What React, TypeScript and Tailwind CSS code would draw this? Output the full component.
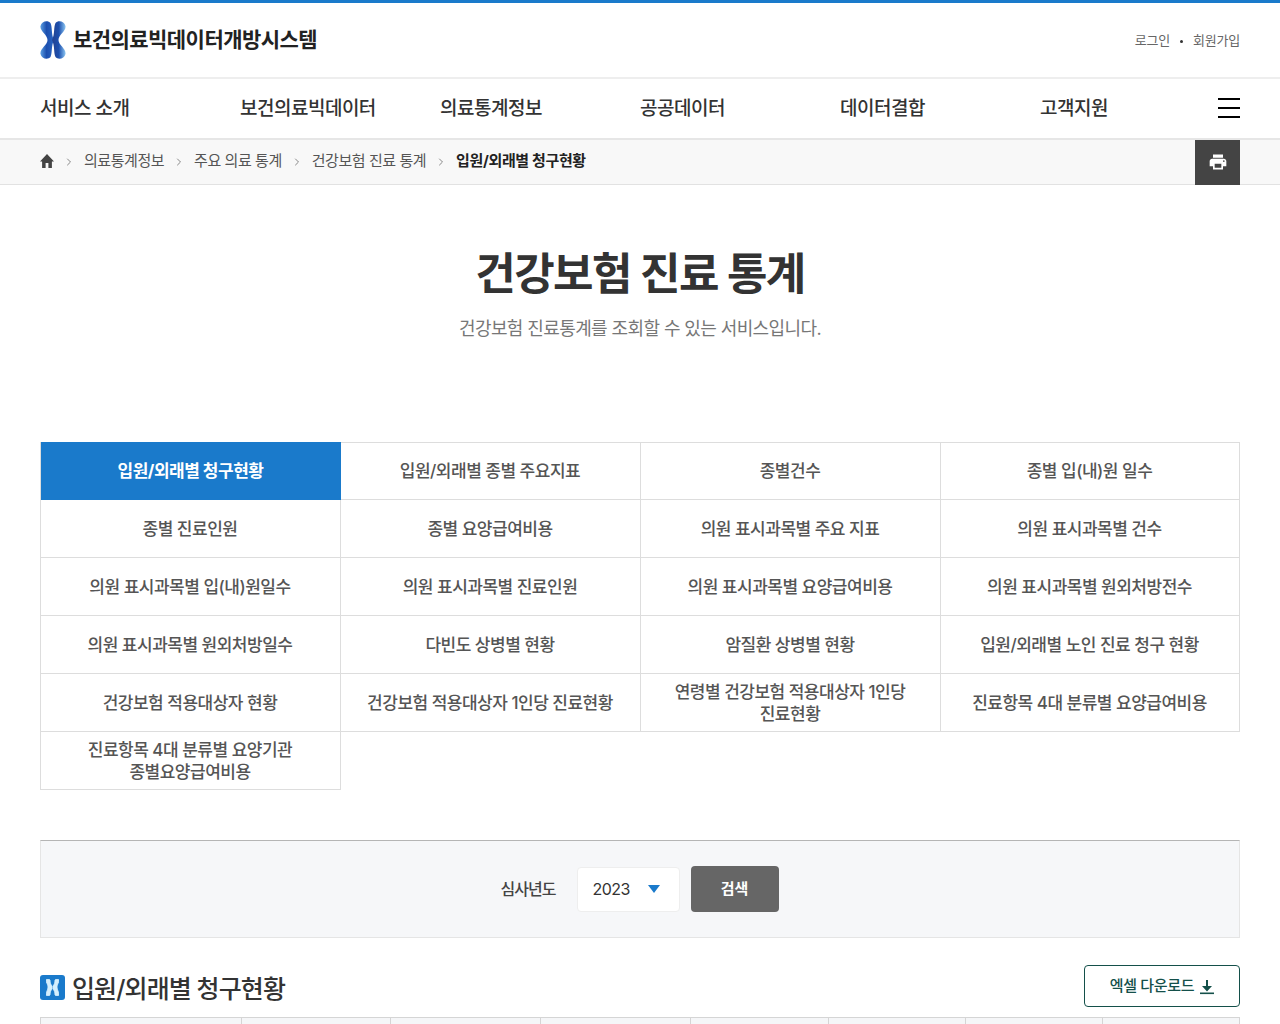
import { ChevronRight } from "lucide-react"

const font = "font-['Inter','Noto_Sans_CJK_KR','Noto_Sans',sans-serif]"

const menus = [
  { label: "서비스 소개", w: "w-[200px]" },
  { label: "보건의료빅데이터", w: "w-[200px]" },
  { label: "의료통계정보", w: "w-[200px]" },
  { label: "공공데이터", w: "w-[200px]" },
  { label: "데이터결합", w: "w-[200px]" },
  { label: "고객지원", w: "w-[178px]" },
]

const tabs = [
  "입원/외래별 청구현황",
  "입원/외래별 종별 주요지표",
  "종별건수",
  "종별 입(내)원 일수",
  "종별 진료인원",
  "종별 요양급여비용",
  "의원 표시과목별 주요 지표",
  "의원 표시과목별 건수",
  "의원 표시과목별 입(내)원일수",
  "의원 표시과목별 진료인원",
  "의원 표시과목별 요양급여비용",
  "의원 표시과목별 원외처방전수",
  "의원 표시과목별 원외처방일수",
  "다빈도 상병별 현황",
  "암질환 상병별 현황",
  "입원/외래별 노인 진료 청구 현황",
  "건강보험 적용대상자 현황",
  "건강보험 적용대상자 1인당 진료현황",
  "연령별 건강보험 적용대상자 1인당 진료현황",
  "진료항목 4대 분류별 요양급여비용",
  "진료항목 4대 분류별 요양기관 종별요양급여비용",
]

const crumbs = ["의료통계정보", "주요 의료 통계", "건강보험 진료 통계"]
const columns = ["w-[201px]", "w-[149px]", "w-[150px]", "w-[150px]", "w-[138px]", "w-[137px]", "w-[137px]", "flex-1"]

function Logo() {
  return (
    <svg width="26" height="38" viewBox="0 0 26 38">
      <defs>
        <linearGradient id="lg" x1="0" y1="0" x2="1" y2="0">
          <stop offset="0" stopColor="#5a9ee2" />
          <stop offset="0.45" stopColor="#1c4fae" />
          <stop offset="1" stopColor="#2a66c4" />
        </linearGradient>
        <linearGradient id="lg2" x1="1" y1="0" x2="0" y2="0">
          <stop offset="0" stopColor="#8cc6f2" />
          <stop offset="0.5" stopColor="#1c4fae" />
          <stop offset="1" stopColor="#24428f" />
        </linearGradient>
      </defs>
      <path d="M0.5 5C1.5 0 8-1 10.5 2c2 4 .5 11 3.5 17-3 6-1.5 13-3.5 17-2.5 3-9 2-10-3-1-5 7-9 7-14S-.5 10 .5 5z" fill="url(#lg)" />
      <path d="M25.5 5C24.5 0 18-1 15.5 2c-2 4-.5 11-3.5 17 3 6 1.5 13 3.5 17 2.5 3 9 2 10-3 1-5-7-9-7-14S26.5 10 25.5 5z" fill="url(#lg2)" />
    </svg>
  )
}

function Header() {
  return (
    <header className="border-t-[3px] border-[#1a7acb]">
      <div className="mx-auto flex h-[74px] w-[1200px] items-center justify-between">
        <div className="flex items-center gap-[7px]">
          <Logo />
          <span className="text-[21px] font-bold tracking-[-0.55px] text-[#222]">보건의료빅데이터개방시스템</span>
        </div>
        <div className="flex items-center gap-[10px] pt-[2px] text-[13px] tracking-[-0.2px] text-[#666]">
          <span>로그인</span>
          <span className="h-[3px] w-[3px] rounded-full bg-[#333]" />
          <span>회원가입</span>
        </div>
      </div>
      <div className="h-[2px] bg-[#eeeeee]" />
      <nav className="mx-auto flex h-[59px] w-[1200px] items-center">
        {menus.map((m) => (
          <div key={m.label} className={`${m.w} pt-[2px] text-[19px] font-medium tracking-[-0.5px] text-[#333]`}>
            {m.label}
          </div>
        ))}
        <div className="mb-[2px] flex w-[22px] flex-col gap-[7px]">
          <span className="h-[2px] bg-black" />
          <span className="h-[2px] bg-black" />
          <span className="h-[2px] bg-black" />
        </div>
      </nav>
      <div className="h-[2px] bg-[#e6e6e6]" />
    </header>
  )
}

function Breadcrumb() {
  return (
    <div className="h-[45px] border-b border-[#e2e2e2] bg-[#f8f8f8]">
      <div className="mx-auto flex h-[45px] w-[1200px] items-start justify-between">
        <div className="flex h-[43px] items-center text-[15px] tracking-[-0.45px] text-[#555]">
          <svg width="14" height="14" viewBox="2 3 20 17" preserveAspectRatio="none" fill="#444" className="mb-[2px]">
            <path d="M10 20v-6h4v6h5v-8h3L12 3 2 12h3v8z" />
          </svg>
          {crumbs.map((c) => (
            <span key={c} className="flex items-center">
              <ChevronRight size={12} className="mx-[9px] text-[#888]" />
              {c}
            </span>
          ))}
          <ChevronRight size={12} className="mx-[9px] text-[#888]" />
          <span className="font-bold tracking-[-0.35px] text-[#222]">입원/외래별 청구현황</span>
        </div>
        <div className="flex h-[45px] w-[45px] items-center justify-center bg-[#444] pb-[2px]">
          <svg width="20" height="20" viewBox="0 0 24 24" fill="#fff">
            <path d="M19 8H5c-1.66 0-3 1.34-3 3v6h4v4h12v-4h4v-6c0-1.66-1.34-3-3-3zm-3 11H8v-5h8v5zm3-7c-.55 0-1-.45-1-1s.45-1 1-1 1 .45 1 1-.45 1-1 1zm-1-9H6v4h12V3z" />
          </svg>
        </div>
      </div>
    </div>
  )
}

function TabGrid() {
  return (
    <div className="grid w-[1200px] grid-cols-4">
      {tabs.map((t, i) => (
        <div
          key={t}
          className={
            i === 0
              ? "relative z-10 -mr-px flex h-[58px] items-center justify-center border-l border-[#dddddd] bg-[#1a7acb] bg-clip-padding pt-[1px] pr-[21px] pl-5 text-center text-[17px] font-bold tracking-[-0.5px] text-white"
              : `flex h-[58px] items-center justify-center border-b border-l border-[#dddddd] pr-[21px] pl-5 text-center text-[17px] leading-[22px] font-medium tracking-[-0.5px] break-keep text-[#555] ${i < 4 ? "border-t" : ""} ${i % 4 === 3 ? "border-r" : ""} ${i === 20 ? "-mr-px border-r" : ""}`
          }
        >
          {t}
        </div>
      ))}
    </div>
  )
}

function SearchBox() {
  return (
    <div className="mt-[50px] flex h-[98px] items-center justify-center border border-x-[#e5e5e5] border-t-[#b5b5b5] border-b-[#e5e5e5] bg-[#f6f7f9]">
      <span className="text-[16px] font-medium tracking-[-1px] text-[#444]">심사년도</span>
      <div className="ml-[22px] flex h-[45px] w-[103px] items-center justify-between rounded-[4px] border border-[#eeeeee] bg-white pr-[19px] pb-[1px] pl-[14px] text-[16px] tracking-[-0.5px] text-[#333]">
        2023
        <span className="h-0 w-0 border-x-[6px] border-t-[8px] border-x-transparent border-t-[#1a7acb]" />
      </div>
      <div className="ml-[11px] flex h-[46px] w-[88px] items-center justify-center rounded-[4px] bg-[#666] pr-[2px] text-[15px] font-bold text-white">
        검색
      </div>
    </div>
  )
}

export default function App() {
  return (
    <div className={`${font} h-[1024px] overflow-hidden bg-white`}>
      <Header />
      <Breadcrumb />
      <main className="mx-auto w-[1200px]">
        <div className="mt-[56px] text-center">
          <h1 className="text-[44px] leading-[66px] font-bold tracking-[-1.5px] text-[#333]">건강보험 진료 통계</h1>
          <p className="mt-[8px] text-[18px] leading-[27px] tracking-[-0.6px] text-[#777]">
            건강보험 진료통계를 조회할 수 있는 서비스입니다.
          </p>
        </div>
        <div className="mt-[100px]">
          <TabGrid />
        </div>
        <SearchBox />
        <div className="mt-[27px] flex h-[42px] items-center justify-between">
          <div className="mt-[2px] flex items-center gap-[7px]">
            <div className="flex h-[25px] w-[25px] items-center justify-center rounded-[3px] bg-[#1a7acb]">
              <svg width="13" height="17" viewBox="0 0 13 17" fill="#d5effd" stroke="#d5effd" strokeWidth="0.8">
                <path d="M0 1c0-1 4-1 4 0 0 3 1 5 2 6v3c-1 1-2 3-2 6 0 1-4 1-4 0 0-3 2-5 2-8S0 4 0 1z" />
                <path d="M13 1c0-1-4-1-4 0 0 3-1 5-2 6v3c1 1 2 3 2 6 0 1 4 1 4 0 0-3-2-5-2-8s2-4 2-7z" />
              </svg>
            </div>
            <h2 className="pt-[4px] text-[25px] leading-[34px] font-medium tracking-[-0.9px] text-[#333]">입원/외래별 청구현황</h2>
          </div>
          <div className="flex h-[42px] w-[156px] items-center justify-center gap-[5px] rounded-[4px] border border-[#14504a] pt-[1px] pl-[1px] text-[15px] font-medium tracking-[-0.3px] text-[#14504a]">
            엑셀 다운로드
            <svg width="16" height="16" viewBox="0 0 16 16" fill="#14504a">
              <path d="M7 1h2v6h4l-5 5.5L3 7h4z" />
              <path d="M1 13.5h14v1.6H1z" />
            </svg>
          </div>
        </div>
        <div className="mt-[10px] flex h-[40px] border border-[#d5d5d5] bg-[#f5f6f8]">
          {columns.map((c, i) => (
            <div key={i} className={`${c} border-r border-[#d5d5d5] last:border-r-0`} />
          ))}
        </div>
      </main>
    </div>
  )
}
